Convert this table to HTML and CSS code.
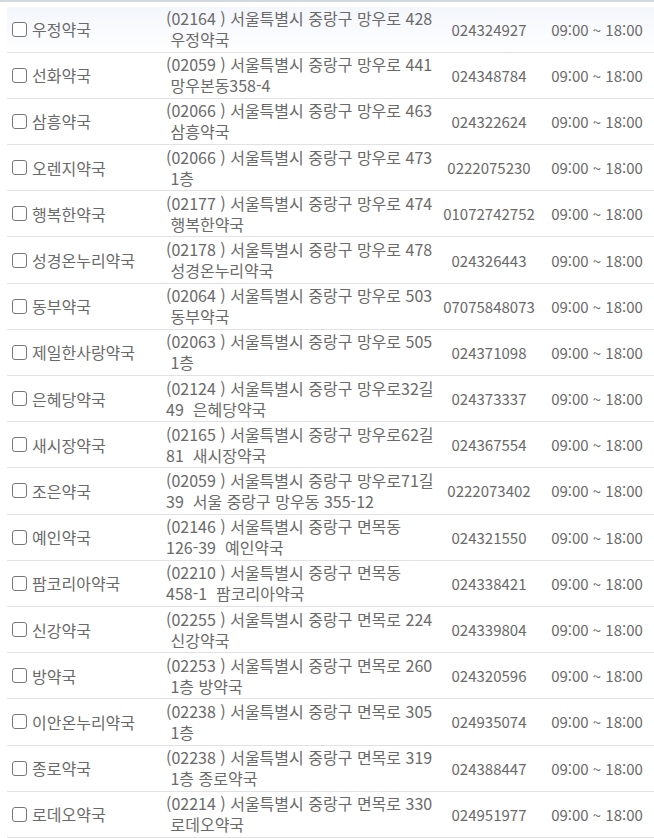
FILE: index.html
```html
<!DOCTYPE html>
<html lang="ko">
<head>
<meta charset="utf-8">
<title>약국 목록</title>
<link rel="stylesheet" href="styles.css">
</head>
<body>
<div class="list">
  <div class="row first"><label class="name"><input type="checkbox" class="chk">우정약국</label><div class="addr">(02164 ) 서울특별시 중랑구 망우로 428<br>&nbsp;우정약국</div><div class="tel">024324927</div><div class="time">09:00 ~ 18:00</div></div>
  <div class="row"><label class="name"><input type="checkbox" class="chk">선화약국</label><div class="addr">(02059 ) 서울특별시 중랑구 망우로 441<br>&nbsp;망우본동358-4</div><div class="tel">024348784</div><div class="time">09:00 ~ 18:00</div></div>
  <div class="row"><label class="name"><input type="checkbox" class="chk">삼흥약국</label><div class="addr">(02066 ) 서울특별시 중랑구 망우로 463<br>&nbsp;삼흥약국</div><div class="tel">024322624</div><div class="time">09:00 ~ 18:00</div></div>
  <div class="row"><label class="name"><input type="checkbox" class="chk">오렌지약국</label><div class="addr">(02066 ) 서울특별시 중랑구 망우로 473<br>&nbsp;1층</div><div class="tel">0222075230</div><div class="time">09:00 ~ 18:00</div></div>
  <div class="row"><label class="name"><input type="checkbox" class="chk">행복한약국</label><div class="addr">(02177 ) 서울특별시 중랑구 망우로 474<br>&nbsp;행복한약국</div><div class="tel">01072742752</div><div class="time">09:00 ~ 18:00</div></div>
  <div class="row"><label class="name"><input type="checkbox" class="chk">성경온누리약국</label><div class="addr">(02178 ) 서울특별시 중랑구 망우로 478<br>&nbsp;성경온누리약국</div><div class="tel">024326443</div><div class="time">09:00 ~ 18:00</div></div>
  <div class="row"><label class="name"><input type="checkbox" class="chk">동부약국</label><div class="addr">(02064 ) 서울특별시 중랑구 망우로 503<br>&nbsp;동부약국</div><div class="tel">07075848073</div><div class="time">09:00 ~ 18:00</div></div>
  <div class="row"><label class="name"><input type="checkbox" class="chk">제일한사랑약국</label><div class="addr">(02063 ) 서울특별시 중랑구 망우로 505<br>&nbsp;1층</div><div class="tel">024371098</div><div class="time">09:00 ~ 18:00</div></div>
  <div class="row"><label class="name"><input type="checkbox" class="chk">은혜당약국</label><div class="addr">(02124 ) 서울특별시 중랑구 망우로32길<br>49 &nbsp;은혜당약국</div><div class="tel">024373337</div><div class="time">09:00 ~ 18:00</div></div>
  <div class="row"><label class="name"><input type="checkbox" class="chk">새시장약국</label><div class="addr">(02165 ) 서울특별시 중랑구 망우로62길<br>81 &nbsp;새시장약국</div><div class="tel">024367554</div><div class="time">09:00 ~ 18:00</div></div>
  <div class="row"><label class="name"><input type="checkbox" class="chk">조은약국</label><div class="addr">(02059 ) 서울특별시 중랑구 망우로71길<br>39 &nbsp;서울 중랑구 망우동 355-12</div><div class="tel">0222073402</div><div class="time">09:00 ~ 18:00</div></div>
  <div class="row"><label class="name"><input type="checkbox" class="chk">예인약국</label><div class="addr">(02146 ) 서울특별시 중랑구 면목동<br>126-39 &nbsp;예인약국</div><div class="tel">024321550</div><div class="time">09:00 ~ 18:00</div></div>
  <div class="row"><label class="name"><input type="checkbox" class="chk">팜코리아약국</label><div class="addr">(02210 ) 서울특별시 중랑구 면목동<br>458-1 &nbsp;팜코리아약국</div><div class="tel">024338421</div><div class="time">09:00 ~ 18:00</div></div>
  <div class="row"><label class="name"><input type="checkbox" class="chk">신강약국</label><div class="addr">(02255 ) 서울특별시 중랑구 면목로 224<br>&nbsp;신강약국</div><div class="tel">024339804</div><div class="time">09:00 ~ 18:00</div></div>
  <div class="row"><label class="name"><input type="checkbox" class="chk">방약국</label><div class="addr">(02253 ) 서울특별시 중랑구 면목로 260<br>&nbsp;1층 방약국</div><div class="tel">024320596</div><div class="time">09:00 ~ 18:00</div></div>
  <div class="row"><label class="name"><input type="checkbox" class="chk">이안온누리약국</label><div class="addr">(02238 ) 서울특별시 중랑구 면목로 305<br>&nbsp;1층</div><div class="tel">024935074</div><div class="time">09:00 ~ 18:00</div></div>
  <div class="row"><label class="name"><input type="checkbox" class="chk">종로약국</label><div class="addr">(02238 ) 서울특별시 중랑구 면목로 319<br>&nbsp;1층 종로약국</div><div class="tel">024388447</div><div class="time">09:00 ~ 18:00</div></div>
  <div class="row"><label class="name"><input type="checkbox" class="chk">로데오약국</label><div class="addr">(02214 ) 서울특별시 중랑구 면목로 330<br>&nbsp;로데오약국</div><div class="tel">024951977</div><div class="time">09:00 ~ 18:00</div></div>
</div>
</body>
</html>
```

FILE: styles.css
```css
html, body {
  margin: 0;
  padding: 0;
  background: #fff;
}
body {
  font-family: "Noto Sans CJK KR", "Noto Sans", sans-serif;
  font-size: 16px;
  color: #6a6a6a;
  overflow: hidden;
}
.list {
  border-top: 2px solid #d3d7de;
  padding-top: 4.5px;
  padding-left: 7px;
}
.row {
  display: grid;
  grid-template-columns: 159px 272px 102px 1fr;
  align-items: center;
  height: 46.2px;
  box-sizing: border-box;
  border-bottom: 1px solid #e2e2e2;
}
.row.first {
  background: linear-gradient(#f3f6fc, #fbfcfe 70%, #fff);
}
.name {
  display: flex;
  align-items: center;
  gap: 5px;
  padding-left: 5px;
  white-space: nowrap;
}
.chk {
  appearance: none;
  -webkit-appearance: none;
  margin: 0;
  width: 15px;
  height: 15px;
  box-sizing: border-box;
  border: 1.5px solid #767676;
  border-radius: 3px;
  background: #fff;
  flex: none;
}
.addr {
  line-height: 21px;
  white-space: nowrap;
}
.tel, .time {
  font-size: 15px;
  text-align: center;
  white-space: nowrap;
}
```
